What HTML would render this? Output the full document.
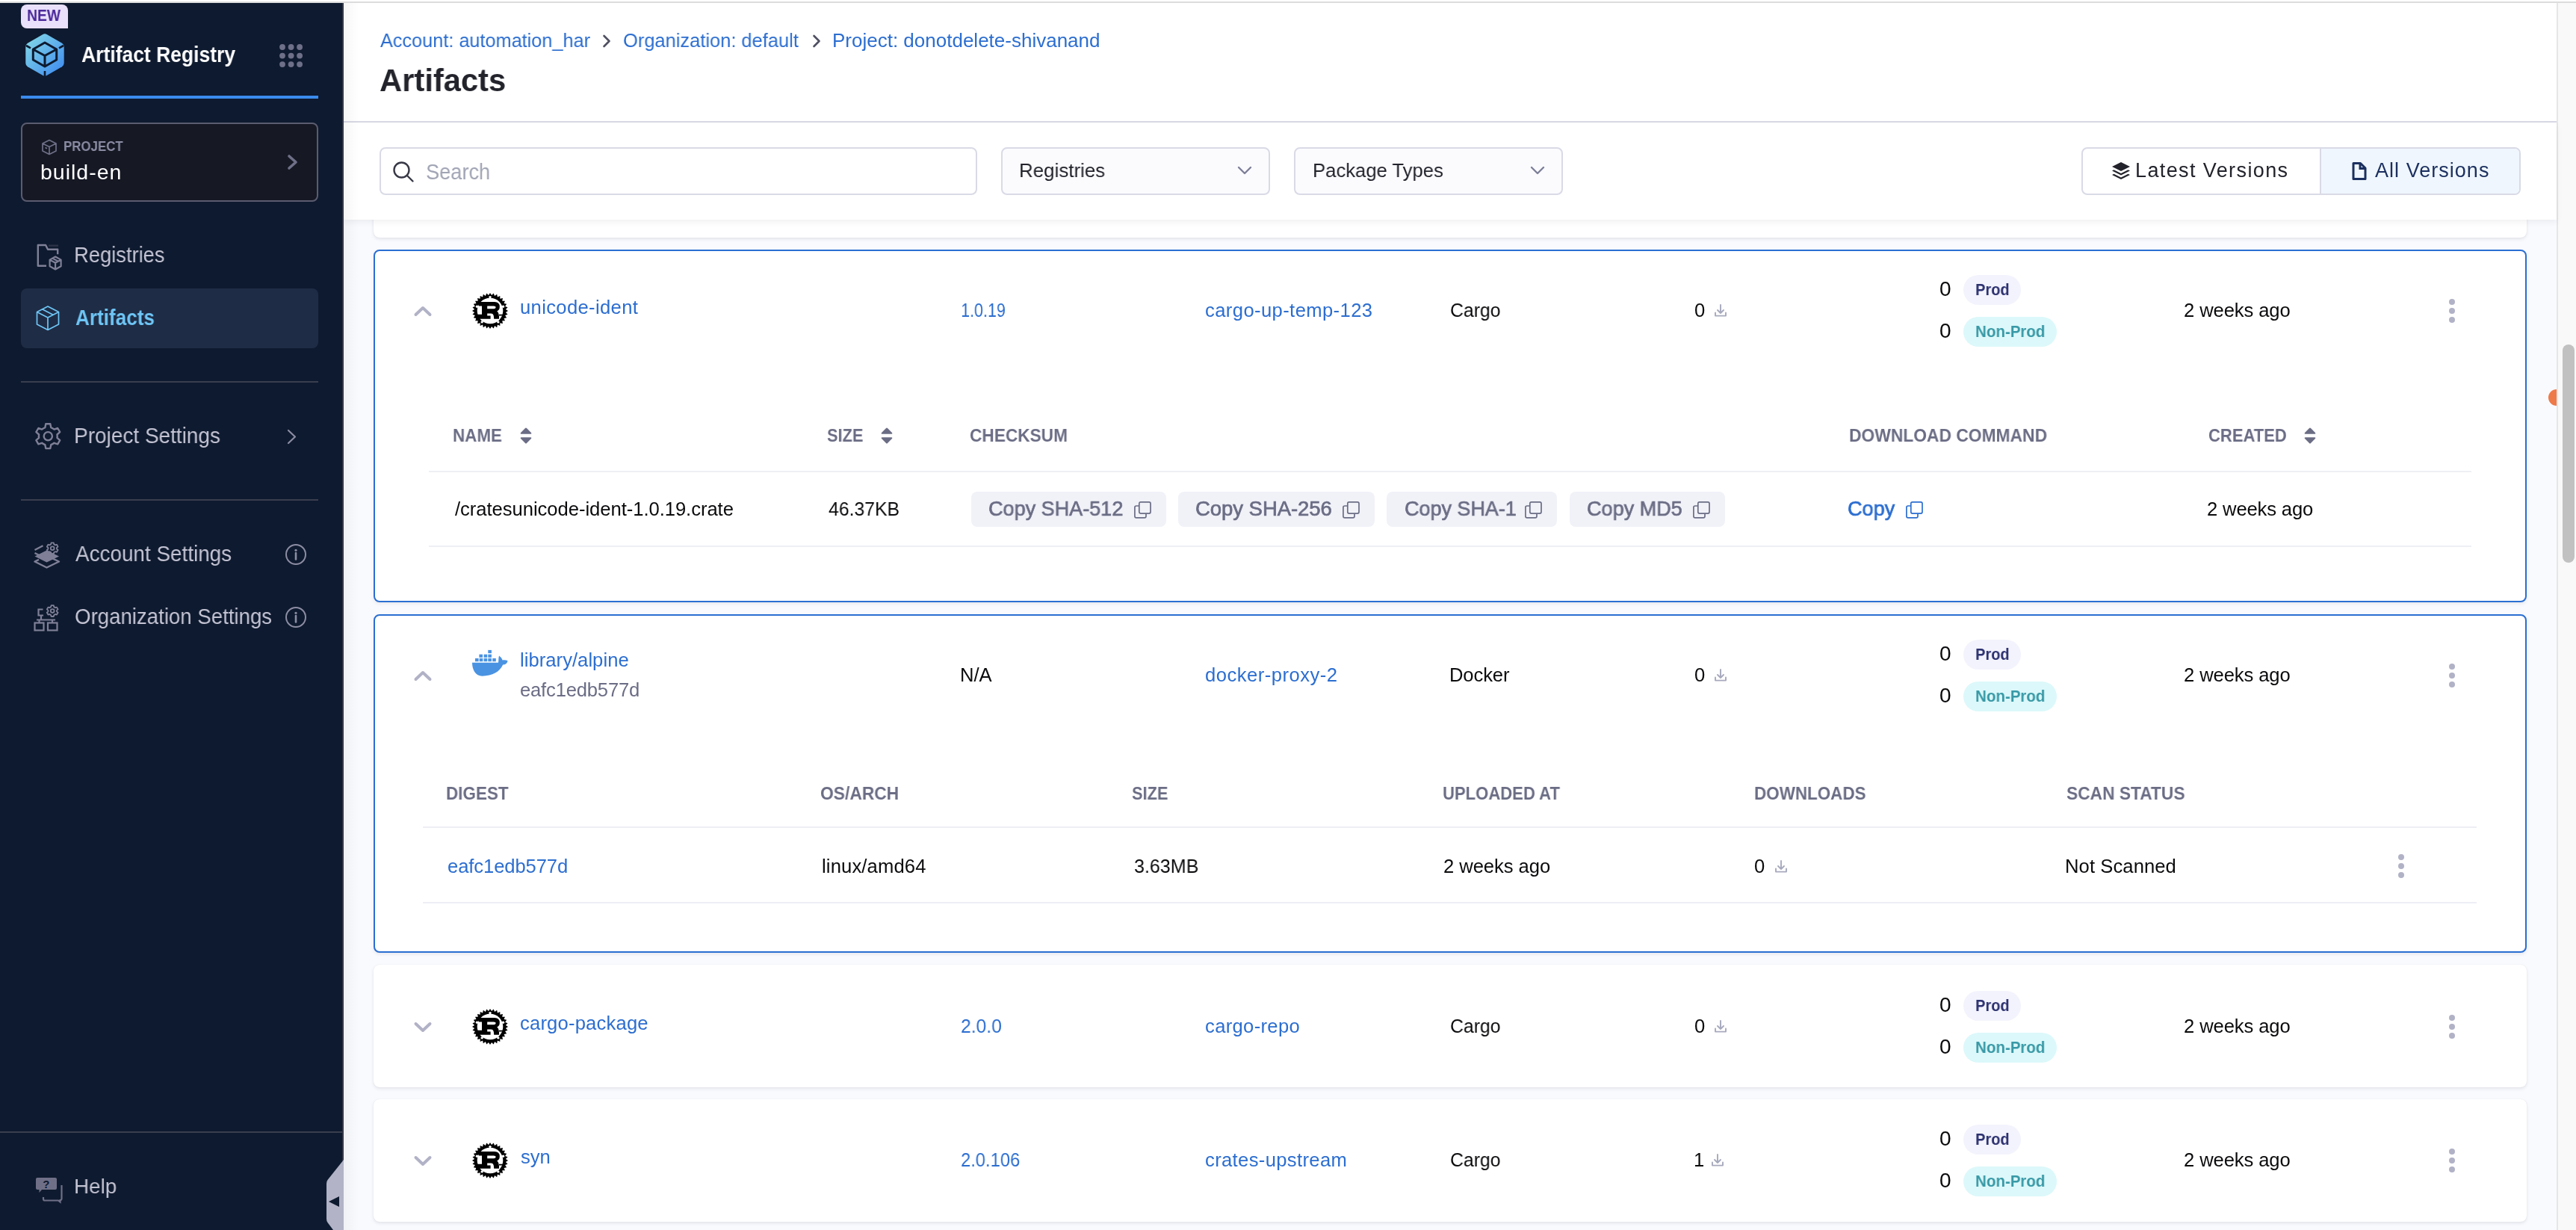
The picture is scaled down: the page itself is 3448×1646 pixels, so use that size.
<!DOCTYPE html>
<html><head><meta charset="utf-8">
<style>
html,body{margin:0;padding:0;}
body{width:3448px;height:1646px;overflow:hidden;position:relative;background:#fff;font-family:"Liberation Sans",sans-serif;}
.a{position:absolute;box-sizing:border-box;}
.t{position:absolute;white-space:nowrap;will-change:transform;}
svg{position:absolute;overflow:visible;}
</style></head><body>
<!-- top strip -->
<div class="a" style="left:0;top:2px;width:3448px;height:2px;background:#dcdcdc"></div>
<!-- main bg -->
<div class="a" style="left:460px;top:4px;width:2962px;height:1642px;background:#f9fafe"></div>
<!-- orange dot -->
<div class="a" style="left:3411px;top:521px;width:22px;height:22px;border-radius:50%;background:#ee7a4a"></div>
<!-- scrollbar -->
<div class="a" style="left:3422px;top:4px;width:26px;height:1642px;background:#f9f9f9;border-left:2px solid #e6e6e6"></div>
<div class="a" style="left:3430px;top:461px;width:16px;height:292px;border-radius:8px;background:#c1c1c1"></div>

<!-- previous card -->
<div class="a" style="left:500px;top:230px;width:2882px;height:88px;background:#fff;border-radius:8px;box-shadow:0 0 1px rgba(40,41,61,.10),0 2px 4px rgba(96,97,112,.14)"></div>
<!-- card 1 -->
<div class="a" style="left:500px;top:334px;width:2882px;height:472px;background:#fff;border:2px solid #2a6fd2;border-radius:8px;box-shadow:0 2px 4px rgba(96,97,112,.12)"></div>
<!-- card 2 -->
<div class="a" style="left:500px;top:822px;width:2882px;height:453px;background:#fff;border:2px solid #2a6fd2;border-radius:8px;box-shadow:0 2px 4px rgba(96,97,112,.12)"></div>
<!-- card 3 -->
<div class="a" style="left:500px;top:1291px;width:2882px;height:164px;background:#fff;border-radius:8px;box-shadow:0 0 1px rgba(40,41,61,.10),0 2px 4px rgba(96,97,112,.14)"></div>
<!-- card 4 -->
<div class="a" style="left:500px;top:1471px;width:2882px;height:164px;background:#fff;border-radius:8px;box-shadow:0 0 1px rgba(40,41,61,.10),0 2px 4px rgba(96,97,112,.14)"></div>

<!-- header -->
<div class="a" style="left:460px;top:4px;width:2962px;height:160px;background:#fff;border-bottom:2px solid #d9dae6"></div>
<div class="a" style="left:460px;top:164px;width:2962px;height:130px;background:#fff;box-shadow:0 3px 8px rgba(40,41,61,.07)"></div>
<!-- sidebar shadow on main -->
<div class="a" style="left:460px;top:4px;width:20px;height:1642px;background:linear-gradient(90deg,rgba(0,0,0,.035),rgba(0,0,0,0))"></div>

<!-- breadcrumb chevrons -->
<svg style="left:806px;top:46px" width="12" height="18" viewBox="0 0 12 18"><path d="M2.5 2 L9.5 9 L2.5 16" fill="none" stroke="#4f5162" stroke-width="2.6" stroke-linecap="round" stroke-linejoin="round"/></svg>
<svg style="left:1087px;top:46px" width="12" height="18" viewBox="0 0 12 18"><path d="M2.5 2 L9.5 9 L2.5 16" fill="none" stroke="#4f5162" stroke-width="2.6" stroke-linecap="round" stroke-linejoin="round"/></svg>

<!-- search box -->
<div class="a" style="left:508px;top:197px;width:800px;height:64px;border:2px solid #d9dae6;border-radius:8px;background:#fff"></div>
<svg style="left:525px;top:215px" width="30" height="30" viewBox="0 0 30 30"><circle cx="12.5" cy="12.5" r="10" fill="none" stroke="#383946" stroke-width="2.4"/><path d="M20 20 L27.5 27.5" stroke="#383946" stroke-width="2.4" stroke-linecap="round"/></svg>
<!-- dropdowns -->
<div class="a" style="left:1340px;top:197px;width:360px;height:64px;border:2px solid #d9dae6;border-radius:8px;background:#fbfbfe"></div>
<svg style="left:1656px;top:221px" width="20" height="15" viewBox="0 0 20 15"><path d="M2 3 L10 11 L18 3" fill="none" stroke="#7d7f98" stroke-width="2.4" stroke-linecap="round" stroke-linejoin="round"/></svg>
<div class="a" style="left:1732px;top:197px;width:360px;height:64px;border:2px solid #d9dae6;border-radius:8px;background:#fbfbfe"></div>
<svg style="left:2048px;top:221px" width="20" height="15" viewBox="0 0 20 15"><path d="M2 3 L10 11 L18 3" fill="none" stroke="#7d7f98" stroke-width="2.4" stroke-linecap="round" stroke-linejoin="round"/></svg>
<!-- toggle -->
<div class="a" style="left:2786px;top:197px;width:588px;height:64px;border:2px solid #d9dae6;border-radius:8px;background:#fff;overflow:hidden"><div class="a" style="left:317px;top:0;width:269px;height:60px;background:#eff6fd;border-left:2px solid #d9dae6"></div></div>
<svg style="left:2826px;top:216px" width="26" height="25" viewBox="0 0 26 25"><path d="M13 1 L25 7 L13 13 L1 7 Z" fill="#22232b"/><path d="M3.5 11.2 L13 16 L22.5 11.2 L25 12.5 L13 18.5 L1 12.5 Z" fill="#22232b"/><path d="M3.5 16.7 L13 21.5 L22.5 16.7 L25 18 L13 24 L1 18 Z" fill="#22232b"/></svg>
<svg style="left:3148px;top:216px" width="20" height="26" viewBox="0 0 20 26"><path d="M2 2.5 H11.5 L18 9 V23.5 H2 Z" fill="none" stroke="#1b2f5f" stroke-width="3" stroke-linejoin="round"/><path d="M11 2.5 V9.5 H18" fill="none" stroke="#1b2f5f" stroke-width="3"/></svg>

<!-- ========== SIDEBAR ========== -->
<div class="a" style="left:0;top:4px;width:460px;height:1642px;background:#0e1a2f;border-right:2px solid #353848"></div>
<!-- NEW badge -->
<div class="a" style="left:28px;top:6px;width:63px;height:32px;background:#e9e0fb;border-radius:8px 8px 0 8px"></div>
<!-- logo -->
<svg style="left:34px;top:45px" width="52" height="57" viewBox="0 0 52 57">
<defs><linearGradient id="lg" x1="0" y1="0" x2="1" y2="1"><stop offset="0" stop-color="#86dce6"/><stop offset="1" stop-color="#3b87f0"/></linearGradient></defs>
<path d="M23 1.2 Q26 -0.5 29 1.2 L49 12.7 Q51.7 14.3 51.7 17.5 L51.7 39.5 Q51.7 42.7 49 44.3 L29 55.8 Q26 57.5 23 55.8 L3 44.3 Q0.3 42.7 0.3 39.5 L0.3 17.5 Q0.3 14.3 3 12.7 Z" fill="url(#lg)"/>
<path d="M26 12 L41.7 21 L41.7 35 L26 44 L10.3 35 L10.3 21 Z M10.3 21 L26 29.5 L41.7 21 M26 29.5 L26 44" fill="none" stroke="#0e1a2f" stroke-width="3" stroke-linejoin="round"/>
<path d="M1 16 L7 19.3 M51 16 L45 19.3 M26 50 L26 57" stroke="#0e1a2f" stroke-width="2.6"/>
</svg>
<!-- grid dots -->
<svg style="left:370px;top:55px" width="40" height="40" viewBox="0 0 40 40" fill="#6e6f88">
<circle cx="8" cy="8" r="3.9"/><circle cx="19.6" cy="8" r="3.9"/><circle cx="31.1" cy="8" r="3.9"/>
<circle cx="8" cy="19.6" r="3.9"/><circle cx="19.6" cy="19.6" r="3.9"/><circle cx="31.1" cy="19.6" r="3.9"/>
<circle cx="8" cy="31.1" r="3.9"/><circle cx="19.6" cy="31.1" r="3.9"/><circle cx="31.1" cy="31.1" r="3.9"/>
</svg>
<div class="a" style="left:28px;top:128px;width:398px;height:4px;background:#3b8bec"></div>
<!-- project box -->
<div class="a" style="left:28px;top:164px;width:398px;height:106px;background:#161924;border:2px solid #5b5c70;border-radius:8px"></div>
<svg style="left:55px;top:186px" width="22" height="22" viewBox="0 0 22 22"><path d="M11 1.5 L20 6 L20 16 L11 20.5 L2 16 L2 6 Z M2 6 L11 10.5 L20 6 M11 10.5 L11 20.5 M5.5 11.5 L8 12.7" fill="none" stroke="#6f7088" stroke-width="1.7" stroke-linejoin="round"/></svg>
<svg style="left:383px;top:206px" width="18" height="24" viewBox="0 0 18 24"><path d="M4 3 L13 11 L4 19" fill="none" stroke="#6f7088" stroke-width="3.6" stroke-linecap="round" stroke-linejoin="round"/></svg>
<!-- registries icon -->
<svg style="left:48px;top:325px" width="38" height="38" viewBox="0 0 38 38" fill="none" stroke="#7f8098" stroke-width="2.4" stroke-linejoin="round">
<path d="M14 30.8 H2.8 V3 H13.1 L16 8.8 H29.2 V15.3"/><path d="M17 3.7 H30" stroke="#2b3247"/>
<path d="M26.1 18.5 L33.6 22.6 L33.6 31.3 L26.1 35.5 L18.6 31.3 L18.6 22.6 Z M18.6 22.6 L26.1 26.8 L33.6 22.6 M26.1 26.8 L26.1 35.5 M22.3 20.6 L29.8 24.7" stroke-width="2.2"/>
</svg>
<!-- active item -->
<div class="a" style="left:28px;top:386px;width:398px;height:80px;background:#1f2c45;border-radius:8px"></div>
<svg style="left:48px;top:408px" width="34" height="36" viewBox="0 0 34 36" fill="none" stroke="#6ec6f6" stroke-width="1.7" stroke-linejoin="round">
<path d="M16 2 L30.5 9.5 L30.5 26 L16 33.5 L1.5 26 L1.5 9.5 Z M1.5 9.5 L16 17 L30.5 9.5 M16 17 L16 33.5 M8.5 5.7 L23 13.2"/>
</svg>
<div class="a" style="left:28px;top:510px;width:398px;height:2px;background:#3a3e4f"></div>
<!-- gear -->
<svg style="left:46px;top:565px" width="37" height="37" viewBox="0 0 37 37">
<path id="gearp" d="M15.3 2.3 H21.3 L22.3 7.2 Q24.6 8.1 26.5 9.6 L31.2 8 L34.2 13.2 L30.5 16.5 Q30.9 18.5 30.5 20.9 L34.2 24.2 L31.2 29.4 L26.5 27.8 Q24.6 29.3 22.3 30.2 L21.3 35.1 H15.3 L14.3 30.2 Q12 29.3 10.1 27.8 L5.4 29.4 L2.4 24.2 L6.1 20.9 Q5.7 18.7 6.1 16.5 L2.4 13.2 L5.4 8 L10.1 9.6 Q12 8.1 14.3 7.2 Z" fill="none" stroke="#7f8098" stroke-width="2.4" stroke-linejoin="round"/>
<circle cx="18.3" cy="18.7" r="5.6" fill="none" stroke="#7f8098" stroke-width="2.4"/>
</svg>
<svg style="left:383px;top:573px" width="16" height="24" viewBox="0 0 16 24"><path d="M3 3 L12 11.5 L3 20" fill="none" stroke="#8c8da4" stroke-width="2.2" stroke-linecap="round" stroke-linejoin="round"/></svg>
<div class="a" style="left:28px;top:668px;width:398px;height:2px;background:#3a3e4f"></div>
<!-- account settings icon -->
<svg style="left:44px;top:722px" width="40" height="40" viewBox="0 0 40 40">
<path d="M2.5 18 L14 23.8 L18.5 21.6 L35 29.5 L18.5 37.5 L2.5 29.5 L8 26.8" fill="none" stroke="#7f8098" stroke-width="2.4" stroke-linejoin="round"/>
<path d="M2.5 22.5 L18.5 30.5 L35 22.5 L18.5 14.5 Z" fill="#7f8098"/>
<path d="M2.5 14 L13.5 8.3" stroke="#7f8098" stroke-width="2.4"/>
<g transform="translate(26.2,11.2) scale(0.8)"><g fill="none" stroke="#7f8098" stroke-width="2.3" stroke-linejoin="round"><path d="M-2 -8.5 H2 L2.6 -6 Q3.8 -5.5 4.7 -4.7 L7.2 -5.5 L9.2 -2 L7.2 -0.2 Q7.3 1 7.2 1.7 L9.2 3.5 L7.2 7 L4.7 6.2 Q3.8 7 2.6 7.5 L2 10 H-2 L-2.6 7.5 Q-3.8 7 -4.7 6.2 L-7.2 7 L-9.2 3.5 L-7.2 1.7 Q-7.3 0.7 -7.2 -0.2 L-9.2 -2 L-7.2 -5.5 L-4.7 -4.7 Q-3.8 -5.5 -2.6 -6 Z"/><circle cx="0" cy="0.75" r="3"/></g></g>
</svg>
<!-- org settings icon -->
<svg style="left:44px;top:806px" width="40" height="40" viewBox="0 0 40 40" fill="none" stroke="#7f8098" stroke-width="2.2">
<path d="M13.5 9.5 H7.5 V17.5 H14 M11 17.5 V23.5 M5 23.5 H30 M8.5 23.5 V27 M26 23.5 V27"/>
<rect x="2.5" y="27.5" width="12" height="10"/><rect x="20" y="27.5" width="12.5" height="10"/>
<g transform="translate(26.2,11) scale(0.8)"><g fill="none" stroke="#7f8098" stroke-width="2.3" stroke-linejoin="round"><path d="M-2 -8.5 H2 L2.6 -6 Q3.8 -5.5 4.7 -4.7 L7.2 -5.5 L9.2 -2 L7.2 -0.2 Q7.3 1 7.2 1.7 L9.2 3.5 L7.2 7 L4.7 6.2 Q3.8 7 2.6 7.5 L2 10 H-2 L-2.6 7.5 Q-3.8 7 -4.7 6.2 L-7.2 7 L-9.2 3.5 L-7.2 1.7 Q-7.3 0.7 -7.2 -0.2 L-9.2 -2 L-7.2 -5.5 L-4.7 -4.7 Q-3.8 -5.5 -2.6 -6 Z"/><circle cx="0" cy="0.75" r="3"/></g></g>
</svg>

<!-- info icons -->
<svg style="left:381px;top:727px" width="30" height="30" viewBox="0 0 30 30"><circle cx="15" cy="15" r="13" fill="none" stroke="#8c8da4" stroke-width="2"/><circle cx="15" cy="9.3" r="1.6" fill="#8c8da4"/><path d="M15 13 V21.5" stroke="#8c8da4" stroke-width="2.6" stroke-linecap="round"/></svg>
<svg style="left:381px;top:811px" width="30" height="30" viewBox="0 0 30 30"><circle cx="15" cy="15" r="13" fill="none" stroke="#8c8da4" stroke-width="2"/><circle cx="15" cy="9.3" r="1.6" fill="#8c8da4"/><path d="M15 13 V21.5" stroke="#8c8da4" stroke-width="2.6" stroke-linecap="round"/></svg>
<!-- bottom divider -->
<div class="a" style="left:0;top:1514px;width:458px;height:2px;background:#3a3e4f"></div>
<!-- help icon -->
<svg style="left:47px;top:1575px" width="40" height="36" viewBox="0 0 40 36">
<path d="M11 27 V29.5 Q11 31.5 13 31.5 H31 L33.5 33.5 V31 Q35.5 31 35.5 29 V11" fill="none" stroke="#6f7088" stroke-width="2.2"/>
<path d="M3 1 H27 Q29 1 29 3 V15 Q29 17 27 17 H9 L5.5 21 V17 H3 Q1 17 1 15 V3 Q1 1 3 1 Z" fill="#6f7088"/>
<text x="14.8" y="14.6" font-family="Liberation Sans" font-weight="700" font-size="15" fill="#0e1a2f" text-anchor="middle">?</text>
</svg>
<!-- collapse tab -->
<svg style="left:434px;top:1550px" width="28" height="96" viewBox="0 0 28 96"><path d="M26 2 L26 96 L12 96 L4.5 86 Q3 84 3 81 L3 34 Q3 31 4.5 29 L26 2 Z" fill="#b2b3c6"/><path d="M6 58 L20 51 L20 65 Z" fill="#0e1a2f"/></svg>
<svg style="left:553.5px;top:408.5px" width="24" height="15" viewBox="0 0 24 15"><path d="M2.5 12 L12 3 L21.5 12" fill="none" stroke="#b1b2c6" stroke-width="4" stroke-linecap="round" stroke-linejoin="round"/></svg>
<svg style="left:632px;top:392px" width="48" height="48" viewBox="0 0 48 48"><polygon points="24.00,0.00 26.06,3.10 28.68,0.46 30.10,3.90 33.18,1.83 33.90,5.48 37.33,4.04 37.32,7.77 40.97,7.03 40.23,10.68 43.96,10.67 42.52,14.10 46.17,14.82 44.10,17.90 47.54,19.32 44.90,21.94 48.00,24.00 44.90,26.06 47.54,28.68 44.10,30.10 46.17,33.18 42.52,33.90 43.96,37.33 40.23,37.32 40.97,40.97 37.32,40.23 37.33,43.96 33.90,42.52 33.18,46.17 30.10,44.10 28.68,47.54 26.06,44.90 24.00,48.00 21.94,44.90 19.32,47.54 17.90,44.10 14.82,46.17 14.10,42.52 10.67,43.96 10.68,40.23 7.03,40.97 7.77,37.32 4.04,37.33 5.48,33.90 1.83,33.18 3.90,30.10 0.46,28.68 3.10,26.06 0.00,24.00 3.10,21.94 0.46,19.32 3.90,17.90 1.83,14.82 5.48,14.10 4.04,10.67 7.77,10.68 7.03,7.03 10.68,7.77 10.67,4.04 14.10,5.48 14.82,1.83 17.90,3.90 19.32,0.46 21.94,3.10" fill="#000"/><circle cx="24" cy="24" r="17.3" fill="#fff"/><path d="M9 12 H30 Q36.8 12 36.8 18.5 Q36.8 23 33.2 24.6 Q35.6 26 35.8 30.6 H43 V34.7 H29.2 L29 32 Q28.6 27.6 25 27.6 H20.2 V30.6 H24.6 V34.7 H5 V28.8 H13 V17.4 H9 Z M20.2 17.4 V21.2 H28.8 Q31.6 21.2 31.6 19.3 Q31.6 17.4 28.8 17.4 Z M36 28.8 H43 V34.7 H36 Z" fill="#000" fill-rule="evenodd"/><circle cx="24.00" cy="5.60" r="1.7" fill="#fff"/><circle cx="41.50" cy="18.31" r="1.7" fill="#fff"/><circle cx="34.82" cy="38.89" r="1.7" fill="#fff"/><circle cx="13.18" cy="38.89" r="1.7" fill="#fff"/><circle cx="6.50" cy="18.31" r="1.7" fill="#fff"/></svg>
<div class="a" style="left:2628px;top:368px;width:77px;height:40px;border-radius:20px;background:#f3f3fd"></div>
<div class="a" style="left:2628px;top:424px;width:125px;height:40px;border-radius:20px;background:#dcf8fa"></div>
<svg style="left:3277px;top:399px" width="10" height="34" viewBox="0 0 10 34" fill="#b1b2c6"><circle cx="5" cy="5" r="4"/><circle cx="5" cy="17" r="4"/><circle cx="5" cy="29" r="4"/></svg>
<svg style="left:553.5px;top:896.5px" width="24" height="15" viewBox="0 0 24 15"><path d="M2.5 12 L12 3 L21.5 12" fill="none" stroke="#b1b2c6" stroke-width="4" stroke-linecap="round" stroke-linejoin="round"/></svg>
<svg style="left:632px;top:869px" width="48" height="36" viewBox="0 0 48 36" fill="#4a93e2"><rect x="21.3" y="0.9" width="4.6" height="4.2"/><rect x="9.4" y="6.7" width="4.6" height="4.2"/><rect x="15.6" y="6.7" width="4.6" height="4.2"/><rect x="21.3" y="6.7" width="4.6" height="4.2"/><rect x="4" y="12" width="4.6" height="4.2"/><rect x="9.7" y="12" width="4.6" height="4.2"/><rect x="15.6" y="12" width="4.6" height="4.2"/><rect x="21.3" y="12" width="4.6" height="4.2"/><rect x="27.2" y="12" width="4.6" height="4.2"/><path d="M0 17.8 H35 C35.5 15 35 12 36 8.5 C37.8 9.8 40 12 40.6 14.6 C43 14 45.5 14.5 47.6 15.3 C47 18.8 44.5 20.5 41.2 20.6 C37 30 27 35.7 13.5 35.7 C4.5 35.7 0 27 0 17.8 Z"/></svg>
<div class="a" style="left:2628px;top:856px;width:77px;height:40px;border-radius:20px;background:#f3f3fd"></div>
<div class="a" style="left:2628px;top:912px;width:125px;height:40px;border-radius:20px;background:#dcf8fa"></div>
<svg style="left:3277px;top:887px" width="10" height="34" viewBox="0 0 10 34" fill="#b1b2c6"><circle cx="5" cy="5" r="4"/><circle cx="5" cy="17" r="4"/><circle cx="5" cy="29" r="4"/></svg>
<svg style="left:553.5px;top:1366.5px" width="24" height="15" viewBox="0 0 24 15"><path d="M2.5 3 L12 12 L21.5 3" fill="none" stroke="#b1b2c6" stroke-width="4" stroke-linecap="round" stroke-linejoin="round"/></svg>
<svg style="left:632px;top:1350px" width="48" height="48" viewBox="0 0 48 48"><polygon points="24.00,0.00 26.06,3.10 28.68,0.46 30.10,3.90 33.18,1.83 33.90,5.48 37.33,4.04 37.32,7.77 40.97,7.03 40.23,10.68 43.96,10.67 42.52,14.10 46.17,14.82 44.10,17.90 47.54,19.32 44.90,21.94 48.00,24.00 44.90,26.06 47.54,28.68 44.10,30.10 46.17,33.18 42.52,33.90 43.96,37.33 40.23,37.32 40.97,40.97 37.32,40.23 37.33,43.96 33.90,42.52 33.18,46.17 30.10,44.10 28.68,47.54 26.06,44.90 24.00,48.00 21.94,44.90 19.32,47.54 17.90,44.10 14.82,46.17 14.10,42.52 10.67,43.96 10.68,40.23 7.03,40.97 7.77,37.32 4.04,37.33 5.48,33.90 1.83,33.18 3.90,30.10 0.46,28.68 3.10,26.06 0.00,24.00 3.10,21.94 0.46,19.32 3.90,17.90 1.83,14.82 5.48,14.10 4.04,10.67 7.77,10.68 7.03,7.03 10.68,7.77 10.67,4.04 14.10,5.48 14.82,1.83 17.90,3.90 19.32,0.46 21.94,3.10" fill="#000"/><circle cx="24" cy="24" r="17.3" fill="#fff"/><path d="M9 12 H30 Q36.8 12 36.8 18.5 Q36.8 23 33.2 24.6 Q35.6 26 35.8 30.6 H43 V34.7 H29.2 L29 32 Q28.6 27.6 25 27.6 H20.2 V30.6 H24.6 V34.7 H5 V28.8 H13 V17.4 H9 Z M20.2 17.4 V21.2 H28.8 Q31.6 21.2 31.6 19.3 Q31.6 17.4 28.8 17.4 Z M36 28.8 H43 V34.7 H36 Z" fill="#000" fill-rule="evenodd"/><circle cx="24.00" cy="5.60" r="1.7" fill="#fff"/><circle cx="41.50" cy="18.31" r="1.7" fill="#fff"/><circle cx="34.82" cy="38.89" r="1.7" fill="#fff"/><circle cx="13.18" cy="38.89" r="1.7" fill="#fff"/><circle cx="6.50" cy="18.31" r="1.7" fill="#fff"/></svg>
<div class="a" style="left:2628px;top:1326px;width:77px;height:40px;border-radius:20px;background:#f3f3fd"></div>
<div class="a" style="left:2628px;top:1382px;width:125px;height:40px;border-radius:20px;background:#dcf8fa"></div>
<svg style="left:3277px;top:1357px" width="10" height="34" viewBox="0 0 10 34" fill="#b1b2c6"><circle cx="5" cy="5" r="4"/><circle cx="5" cy="17" r="4"/><circle cx="5" cy="29" r="4"/></svg>
<svg style="left:553.5px;top:1545.5px" width="24" height="15" viewBox="0 0 24 15"><path d="M2.5 3 L12 12 L21.5 3" fill="none" stroke="#b1b2c6" stroke-width="4" stroke-linecap="round" stroke-linejoin="round"/></svg>
<svg style="left:632px;top:1529px" width="48" height="48" viewBox="0 0 48 48"><polygon points="24.00,0.00 26.06,3.10 28.68,0.46 30.10,3.90 33.18,1.83 33.90,5.48 37.33,4.04 37.32,7.77 40.97,7.03 40.23,10.68 43.96,10.67 42.52,14.10 46.17,14.82 44.10,17.90 47.54,19.32 44.90,21.94 48.00,24.00 44.90,26.06 47.54,28.68 44.10,30.10 46.17,33.18 42.52,33.90 43.96,37.33 40.23,37.32 40.97,40.97 37.32,40.23 37.33,43.96 33.90,42.52 33.18,46.17 30.10,44.10 28.68,47.54 26.06,44.90 24.00,48.00 21.94,44.90 19.32,47.54 17.90,44.10 14.82,46.17 14.10,42.52 10.67,43.96 10.68,40.23 7.03,40.97 7.77,37.32 4.04,37.33 5.48,33.90 1.83,33.18 3.90,30.10 0.46,28.68 3.10,26.06 0.00,24.00 3.10,21.94 0.46,19.32 3.90,17.90 1.83,14.82 5.48,14.10 4.04,10.67 7.77,10.68 7.03,7.03 10.68,7.77 10.67,4.04 14.10,5.48 14.82,1.83 17.90,3.90 19.32,0.46 21.94,3.10" fill="#000"/><circle cx="24" cy="24" r="17.3" fill="#fff"/><path d="M9 12 H30 Q36.8 12 36.8 18.5 Q36.8 23 33.2 24.6 Q35.6 26 35.8 30.6 H43 V34.7 H29.2 L29 32 Q28.6 27.6 25 27.6 H20.2 V30.6 H24.6 V34.7 H5 V28.8 H13 V17.4 H9 Z M20.2 17.4 V21.2 H28.8 Q31.6 21.2 31.6 19.3 Q31.6 17.4 28.8 17.4 Z M36 28.8 H43 V34.7 H36 Z" fill="#000" fill-rule="evenodd"/><circle cx="24.00" cy="5.60" r="1.7" fill="#fff"/><circle cx="41.50" cy="18.31" r="1.7" fill="#fff"/><circle cx="34.82" cy="38.89" r="1.7" fill="#fff"/><circle cx="13.18" cy="38.89" r="1.7" fill="#fff"/><circle cx="6.50" cy="18.31" r="1.7" fill="#fff"/></svg>
<div class="a" style="left:2628px;top:1505px;width:77px;height:40px;border-radius:20px;background:#f3f3fd"></div>
<div class="a" style="left:2628px;top:1561px;width:125px;height:40px;border-radius:20px;background:#dcf8fa"></div>
<svg style="left:3277px;top:1536px" width="10" height="34" viewBox="0 0 10 34" fill="#b1b2c6"><circle cx="5" cy="5" r="4"/><circle cx="5" cy="17" r="4"/><circle cx="5" cy="29" r="4"/></svg>
<svg style="left:2294.5px;top:407px" width="17" height="17" viewBox="0 0 17 17" fill="none" stroke="#a7a9bd" stroke-width="1.9" stroke-linecap="round" stroke-linejoin="round"><path d="M8 1 V12 M4 8 L8 12 L12 8 M1 11.5 V15.6 H15 V11.5"/></svg>
<svg style="left:2294.5px;top:895px" width="17" height="17" viewBox="0 0 17 17" fill="none" stroke="#a7a9bd" stroke-width="1.9" stroke-linecap="round" stroke-linejoin="round"><path d="M8 1 V12 M4 8 L8 12 L12 8 M1 11.5 V15.6 H15 V11.5"/></svg>
<svg style="left:2294.5px;top:1365px" width="17" height="17" viewBox="0 0 17 17" fill="none" stroke="#a7a9bd" stroke-width="1.9" stroke-linecap="round" stroke-linejoin="round"><path d="M8 1 V12 M4 8 L8 12 L12 8 M1 11.5 V15.6 H15 V11.5"/></svg>
<svg style="left:2290.5px;top:1544px" width="17" height="17" viewBox="0 0 17 17" fill="none" stroke="#a7a9bd" stroke-width="1.9" stroke-linecap="round" stroke-linejoin="round"><path d="M8 1 V12 M4 8 L8 12 L12 8 M1 11.5 V15.6 H15 V11.5"/></svg>
<div class="a" style="left:574px;top:630px;width:2734px;height:2px;background:#eeeff5"></div>
<div class="a" style="left:574px;top:730px;width:2734px;height:2px;background:#eeeff5"></div>
<svg style="left:696px;top:572px" width="16" height="22" viewBox="0 0 16 22" fill="#6b6d85"><path d="M8 0.5 Q8.6 0.5 9 1 L15.2 7.3 Q15.8 8.8 14.3 8.8 H1.7 Q0.2 8.8 0.8 7.3 L7 1 Q7.4 0.5 8 0.5 Z"/><path d="M8 21.5 Q8.6 21.5 9 21 L15.2 14.7 Q15.8 13.2 14.3 13.2 H1.7 Q0.2 13.2 0.8 14.7 L7 21 Q7.4 21.5 8 21.5 Z"/></svg>
<svg style="left:1178.5px;top:572px" width="16" height="22" viewBox="0 0 16 22" fill="#6b6d85"><path d="M8 0.5 Q8.6 0.5 9 1 L15.2 7.3 Q15.8 8.8 14.3 8.8 H1.7 Q0.2 8.8 0.8 7.3 L7 1 Q7.4 0.5 8 0.5 Z"/><path d="M8 21.5 Q8.6 21.5 9 21 L15.2 14.7 Q15.8 13.2 14.3 13.2 H1.7 Q0.2 13.2 0.8 14.7 L7 21 Q7.4 21.5 8 21.5 Z"/></svg>
<svg style="left:3084px;top:572px" width="16" height="22" viewBox="0 0 16 22" fill="#6b6d85"><path d="M8 0.5 Q8.6 0.5 9 1 L15.2 7.3 Q15.8 8.8 14.3 8.8 H1.7 Q0.2 8.8 0.8 7.3 L7 1 Q7.4 0.5 8 0.5 Z"/><path d="M8 21.5 Q8.6 21.5 9 21 L15.2 14.7 Q15.8 13.2 14.3 13.2 H1.7 Q0.2 13.2 0.8 14.7 L7 21 Q7.4 21.5 8 21.5 Z"/></svg>
<div class="a" style="left:1300px;top:658px;width:261px;height:47px;border-radius:8px;background:#f1f2f8"></div>
<div class="a" style="left:1577px;top:658px;width:263px;height:47px;border-radius:8px;background:#f1f2f8"></div>
<div class="a" style="left:1856px;top:658px;width:228px;height:47px;border-radius:8px;background:#f1f2f8"></div>
<div class="a" style="left:2101px;top:658px;width:208px;height:47px;border-radius:8px;background:#f1f2f8"></div>
<svg style="left:1517.5px;top:670.5px" width="23" height="23" viewBox="0 0 23 23" fill="none" stroke="#6b6d85" stroke-width="1.7"><rect x="6.8" y="0.9" width="15.2" height="15.2" rx="2"/><path d="M6.8 6 H3 Q0.9 6 0.9 8 V19.8 Q0.9 21.9 3 21.9 H14 Q16 21.9 16 19.8 V16.1"/></svg>
<svg style="left:1796.5px;top:670.5px" width="23" height="23" viewBox="0 0 23 23" fill="none" stroke="#6b6d85" stroke-width="1.7"><rect x="6.8" y="0.9" width="15.2" height="15.2" rx="2"/><path d="M6.8 6 H3 Q0.9 6 0.9 8 V19.8 Q0.9 21.9 3 21.9 H14 Q16 21.9 16 19.8 V16.1"/></svg>
<svg style="left:2041px;top:670.5px" width="23" height="23" viewBox="0 0 23 23" fill="none" stroke="#6b6d85" stroke-width="1.7"><rect x="6.8" y="0.9" width="15.2" height="15.2" rx="2"/><path d="M6.8 6 H3 Q0.9 6 0.9 8 V19.8 Q0.9 21.9 3 21.9 H14 Q16 21.9 16 19.8 V16.1"/></svg>
<svg style="left:2265.5px;top:670.5px" width="23" height="23" viewBox="0 0 23 23" fill="none" stroke="#6b6d85" stroke-width="1.7"><rect x="6.8" y="0.9" width="15.2" height="15.2" rx="2"/><path d="M6.8 6 H3 Q0.9 6 0.9 8 V19.8 Q0.9 21.9 3 21.9 H14 Q16 21.9 16 19.8 V16.1"/></svg>
<svg style="left:2550.5px;top:670.5px" width="23" height="23" viewBox="0 0 23 23" fill="none" stroke="#2c6ed0" stroke-width="1.7"><rect x="6.8" y="0.9" width="15.2" height="15.2" rx="2"/><path d="M6.8 6 H3 Q0.9 6 0.9 8 V19.8 Q0.9 21.9 3 21.9 H14 Q16 21.9 16 19.8 V16.1"/></svg>
<div class="a" style="left:566px;top:1106px;width:2749px;height:2px;background:#eeeff5"></div>
<div class="a" style="left:566px;top:1207px;width:2749px;height:2px;background:#eeeff5"></div>
<svg style="left:2376px;top:1151px" width="17" height="17" viewBox="0 0 17 17" fill="none" stroke="#a7a9bd" stroke-width="1.9" stroke-linecap="round" stroke-linejoin="round"><path d="M8 1 V12 M4 8 L8 12 L12 8 M1 11.5 V15.6 H15 V11.5"/></svg>
<svg style="left:3209px;top:1142px" width="10" height="34" viewBox="0 0 10 34" fill="#b1b2c6"><circle cx="5" cy="5" r="4"/><circle cx="5" cy="17" r="4"/><circle cx="5" cy="29" r="4"/></svg>
<div class="t" style="left:36.00px;top:10.88px;font:600 21.4px/21.4px 'Liberation Sans';color:#4c2a9b;transform:scaleX(0.8991);transform-origin:1.00px 0;">NEW</div>
<div class="t" style="left:108.70px;top:58.71px;font:700 28.7px/28.7px 'Liberation Sans';color:#ffffff;transform:scaleX(0.9233);transform-origin:0.00px 0;">Artifact Registry</div>
<div class="t" style="left:85.00px;top:188.02px;font:700 17.7px/17.7px 'Liberation Sans';color:#8b8ca4;transform:scaleX(0.9524);transform-origin:1.00px 0;">PROJECT</div>
<div class="t" style="left:54.00px;top:215.87px;font:400 28.5px/28.5px 'Liberation Sans';color:#ffffff;letter-spacing:0.992px;">build-en</div>
<div class="t" style="left:99.00px;top:326.77px;font:400 29.1px/29.1px 'Liberation Sans';color:#c4c4d4;transform:scaleX(0.9385);transform-origin:2.00px 0;">Registries</div>
<div class="t" style="left:101.00px;top:410.62px;font:700 28.8px/28.8px 'Liberation Sans';color:#6ec6f6;transform:scaleX(0.9067);transform-origin:0.00px 0;">Artifacts</div>
<div class="t" style="left:99.00px;top:569.37px;font:400 29.1px/29.1px 'Liberation Sans';color:#c4c4d4;transform:scaleX(0.9612);transform-origin:2.00px 0;">Project Settings</div>
<div class="t" style="left:101.00px;top:727.37px;font:400 29.1px/29.1px 'Liberation Sans';color:#c4c4d4;transform:scaleX(0.9578);transform-origin:0.00px 0;">Account Settings</div>
<div class="t" style="left:100.00px;top:810.97px;font:400 29.1px/29.1px 'Liberation Sans';color:#c4c4d4;transform:scaleX(0.9493);transform-origin:1.00px 0;">Organization Settings</div>
<div class="t" style="left:99.00px;top:1572.87px;font:400 28.5px/28.5px 'Liberation Sans';color:#c4c4d4;transform:scaleX(0.9755);transform-origin:2.00px 0;">Help</div>
<div class="t" style="left:508.50px;top:40.89px;font:400 26px/26px 'Liberation Sans';color:#2c6ed0;transform:scaleX(0.9720);transform-origin:0.00px 0;">Account: automation_har</div>
<div class="t" style="left:834.00px;top:40.89px;font:400 26px/26px 'Liberation Sans';color:#2c6ed0;transform:scaleX(0.9787);transform-origin:1.00px 0;">Organization: default</div>
<div class="t" style="left:1113.70px;top:40.89px;font:400 26px/26px 'Liberation Sans';color:#2c6ed0;">Project: donotdelete-shivanand</div>
<div class="t" style="left:508.00px;top:86.72px;font:700 42.5px/42.5px 'Liberation Sans';color:#22232b;transform:scaleX(0.9813);transform-origin:1.00px 0;">Artifacts</div>
<div class="t" style="left:569.90px;top:214.70px;font:400 29.3px/29.3px 'Liberation Sans';color:#a0a4b4;transform:scaleX(0.9267);transform-origin:1.00px 0;">Search</div>
<div class="t" style="left:1364.40px;top:214.80px;font:400 26.7px/26.7px 'Liberation Sans';color:#22232b;transform:scaleX(0.9699);transform-origin:2.00px 0;">Registries</div>
<div class="t" style="left:1756.80px;top:214.80px;font:400 26.7px/26.7px 'Liberation Sans';color:#22232b;transform:scaleX(0.9599);transform-origin:2.00px 0;">Package Types</div>
<div class="t" style="left:2858.40px;top:214.74px;font:400 27px/27px 'Liberation Sans';color:#22232b;letter-spacing:1.392px;">Latest Versions</div>
<div class="t" style="left:3178.80px;top:214.74px;font:400 27px/27px 'Liberation Sans';color:#1b2f5f;letter-spacing:1.031px;">All Versions</div>
<div class="t" style="left:696.00px;top:398.83px;font:400 25.6px/25.6px 'Liberation Sans';color:#2c6ed0;letter-spacing:0.345px;">unicode-ident</div>
<div class="t" style="left:1286.40px;top:402.63px;font:400 25.6px/25.6px 'Liberation Sans';color:#2c6ed0;transform:scaleX(0.8381);transform-origin:1.00px 0;">1.0.19</div>
<div class="t" style="left:1613.20px;top:402.93px;font:400 25.6px/25.6px 'Liberation Sans';color:#2c6ed0;letter-spacing:0.398px;">cargo-up-temp-123</div>
<div class="t" style="left:1940.80px;top:402.73px;font:400 25.6px/25.6px 'Liberation Sans';color:#0b0b0d;transform:scaleX(0.9668);transform-origin:1.00px 0;">Cargo</div>
<div class="t" style="left:2268.00px;top:402.93px;font:400 25.6px/25.6px 'Liberation Sans';color:#0b0b0d;">0</div>
<div class="t" style="left:2596.00px;top:373.00px;font:400 28px/28px 'Liberation Sans';color:#0b0b0d;">0</div>
<div class="t" style="left:2596.00px;top:428.90px;font:400 28px/28px 'Liberation Sans';color:#0b0b0d;">0</div>
<div class="t" style="left:2643.80px;top:376.63px;font:700 21.7px/21.7px 'Liberation Sans';color:#2d3270;transform:scaleX(0.9204);transform-origin:1.00px 0;">Prod</div>
<div class="t" style="left:2643.80px;top:432.63px;font:700 21.7px/21.7px 'Liberation Sans';color:#3899a6;transform:scaleX(0.9448);transform-origin:1.00px 0;">Non-Prod</div>
<div class="t" style="left:2922.60px;top:402.73px;font:400 25.6px/25.6px 'Liberation Sans';color:#0b0b0d;letter-spacing:-0.107px;">2 weeks ago</div>
<div class="t" style="left:696.00px;top:871.13px;font:400 25.6px/25.6px 'Liberation Sans';color:#2c6ed0;letter-spacing:0.041px;">library/alpine</div>
<div class="t" style="left:696.00px;top:911.13px;font:400 25.6px/25.6px 'Liberation Sans';color:#6b6d85;letter-spacing:-0.183px;">eafc1edb577d</div>
<div class="t" style="left:1285.40px;top:890.63px;font:400 25.6px/25.6px 'Liberation Sans';color:#0b0b0d;">N/A</div>
<div class="t" style="left:1613.20px;top:890.93px;font:400 25.6px/25.6px 'Liberation Sans';color:#2c6ed0;letter-spacing:0.481px;">docker-proxy-2</div>
<div class="t" style="left:1939.80px;top:890.73px;font:400 25.6px/25.6px 'Liberation Sans';color:#0b0b0d;letter-spacing:-0.129px;">Docker</div>
<div class="t" style="left:2268.00px;top:890.93px;font:400 25.6px/25.6px 'Liberation Sans';color:#0b0b0d;">0</div>
<div class="t" style="left:2596.00px;top:861.00px;font:400 28px/28px 'Liberation Sans';color:#0b0b0d;">0</div>
<div class="t" style="left:2596.00px;top:916.90px;font:400 28px/28px 'Liberation Sans';color:#0b0b0d;">0</div>
<div class="t" style="left:2643.80px;top:864.63px;font:700 21.7px/21.7px 'Liberation Sans';color:#2d3270;transform:scaleX(0.9204);transform-origin:1.00px 0;">Prod</div>
<div class="t" style="left:2643.80px;top:920.63px;font:700 21.7px/21.7px 'Liberation Sans';color:#3899a6;transform:scaleX(0.9448);transform-origin:1.00px 0;">Non-Prod</div>
<div class="t" style="left:2922.60px;top:890.73px;font:400 25.6px/25.6px 'Liberation Sans';color:#0b0b0d;letter-spacing:-0.107px;">2 weeks ago</div>
<div class="t" style="left:696.00px;top:1356.83px;font:400 25.6px/25.6px 'Liberation Sans';color:#2c6ed0;letter-spacing:0.185px;">cargo-package</div>
<div class="t" style="left:1286.40px;top:1360.63px;font:400 25.6px/25.6px 'Liberation Sans';color:#2c6ed0;transform:scaleX(0.9625);transform-origin:1.00px 0;">2.0.0</div>
<div class="t" style="left:1613.20px;top:1360.93px;font:400 25.6px/25.6px 'Liberation Sans';color:#2c6ed0;letter-spacing:0.329px;">cargo-repo</div>
<div class="t" style="left:1940.80px;top:1360.73px;font:400 25.6px/25.6px 'Liberation Sans';color:#0b0b0d;transform:scaleX(0.9668);transform-origin:1.00px 0;">Cargo</div>
<div class="t" style="left:2268.00px;top:1360.93px;font:400 25.6px/25.6px 'Liberation Sans';color:#0b0b0d;">0</div>
<div class="t" style="left:2596.00px;top:1331.00px;font:400 28px/28px 'Liberation Sans';color:#0b0b0d;">0</div>
<div class="t" style="left:2596.00px;top:1386.90px;font:400 28px/28px 'Liberation Sans';color:#0b0b0d;">0</div>
<div class="t" style="left:2643.80px;top:1334.63px;font:700 21.7px/21.7px 'Liberation Sans';color:#2d3270;transform:scaleX(0.9204);transform-origin:1.00px 0;">Prod</div>
<div class="t" style="left:2643.80px;top:1390.63px;font:700 21.7px/21.7px 'Liberation Sans';color:#3899a6;transform:scaleX(0.9448);transform-origin:1.00px 0;">Non-Prod</div>
<div class="t" style="left:2922.60px;top:1360.73px;font:400 25.6px/25.6px 'Liberation Sans';color:#0b0b0d;letter-spacing:-0.107px;">2 weeks ago</div>
<div class="t" style="left:697.00px;top:1535.83px;font:400 25.6px/25.6px 'Liberation Sans';color:#2c6ed0;letter-spacing:-0.097px;">syn</div>
<div class="t" style="left:1286.40px;top:1539.63px;font:400 25.6px/25.6px 'Liberation Sans';color:#2c6ed0;transform:scaleX(0.9256);transform-origin:1.00px 0;">2.0.106</div>
<div class="t" style="left:1613.20px;top:1539.93px;font:400 25.6px/25.6px 'Liberation Sans';color:#2c6ed0;letter-spacing:0.351px;">crates-upstream</div>
<div class="t" style="left:1940.80px;top:1539.73px;font:400 25.6px/25.6px 'Liberation Sans';color:#0b0b0d;transform:scaleX(0.9668);transform-origin:1.00px 0;">Cargo</div>
<div class="t" style="left:2267.40px;top:1539.93px;font:400 25.6px/25.6px 'Liberation Sans';color:#0b0b0d;">1</div>
<div class="t" style="left:2596.00px;top:1510.00px;font:400 28px/28px 'Liberation Sans';color:#0b0b0d;">0</div>
<div class="t" style="left:2596.00px;top:1565.90px;font:400 28px/28px 'Liberation Sans';color:#0b0b0d;">0</div>
<div class="t" style="left:2643.80px;top:1513.63px;font:700 21.7px/21.7px 'Liberation Sans';color:#2d3270;transform:scaleX(0.9204);transform-origin:1.00px 0;">Prod</div>
<div class="t" style="left:2643.80px;top:1569.63px;font:700 21.7px/21.7px 'Liberation Sans';color:#3899a6;transform:scaleX(0.9448);transform-origin:1.00px 0;">Non-Prod</div>
<div class="t" style="left:2922.60px;top:1539.73px;font:400 25.6px/25.6px 'Liberation Sans';color:#0b0b0d;letter-spacing:-0.107px;">2 weeks ago</div>
<div class="t" style="left:606.10px;top:572.18px;font:700 23.3px/23.3px 'Liberation Sans';color:#6b6d85;transform:scaleX(0.9604);transform-origin:1.00px 0;">NAME</div>
<div class="t" style="left:1106.50px;top:572.18px;font:700 23.3px/23.3px 'Liberation Sans';color:#6b6d85;transform:scaleX(0.9348);transform-origin:0.00px 0;">SIZE</div>
<div class="t" style="left:1298.00px;top:572.18px;font:700 23.3px/23.3px 'Liberation Sans';color:#6b6d85;transform:scaleX(0.9730);transform-origin:0.00px 0;">CHECKSUM</div>
<div class="t" style="left:2475.00px;top:572.18px;font:700 23.3px/23.3px 'Liberation Sans';color:#6b6d85;transform:scaleX(0.9798);transform-origin:1.00px 0;">DOWNLOAD COMMAND</div>
<div class="t" style="left:2956.00px;top:572.18px;font:700 23.3px/23.3px 'Liberation Sans';color:#6b6d85;transform:scaleX(0.9450);transform-origin:0.00px 0;">CREATED</div>
<div class="t" style="left:608.50px;top:668.93px;font:400 25.6px/25.6px 'Liberation Sans';color:#0b0b0d;letter-spacing:-0.039px;">/cratesunicode-ident-1.0.19.crate</div>
<div class="t" style="left:1108.70px;top:668.93px;font:400 25.6px/25.6px 'Liberation Sans';color:#0b0b0d;transform:scaleX(0.9689);transform-origin:0.00px 0;">46.37KB</div>
<div class="t" style="left:1323.00px;top:667.32px;font:400 27.5px/27.5px 'Liberation Sans';color:#6b6d85;-webkit-text-stroke:0.7px #6b6d85;transform:scaleX(0.9827);transform-origin:1.00px 0;">Copy SHA-512</div>
<div class="t" style="left:1600.00px;top:667.32px;font:400 27.5px/27.5px 'Liberation Sans';color:#6b6d85;-webkit-text-stroke:0.7px #6b6d85;letter-spacing:-0.048px;">Copy SHA-256</div>
<div class="t" style="left:1879.50px;top:667.32px;font:400 27.5px/27.5px 'Liberation Sans';color:#6b6d85;-webkit-text-stroke:0.7px #6b6d85;transform:scaleX(0.9798);transform-origin:1.00px 0;">Copy SHA-1</div>
<div class="t" style="left:2124.00px;top:667.32px;font:400 27.5px/27.5px 'Liberation Sans';color:#6b6d85;-webkit-text-stroke:0.7px #6b6d85;transform:scaleX(0.9836);transform-origin:1.00px 0;">Copy MD5</div>
<div class="t" style="left:2473.00px;top:667.32px;font:400 27.5px/27.5px 'Liberation Sans';color:#2c6ed0;-webkit-text-stroke:0.7px #2c6ed0;transform:scaleX(0.9835);transform-origin:1.00px 0;">Copy</div>
<div class="t" style="left:2954.00px;top:668.93px;font:400 25.6px/25.6px 'Liberation Sans';color:#0b0b0d;letter-spacing:-0.147px;">2 weeks ago</div>
<div class="t" style="left:597.00px;top:1051.08px;font:700 23.3px/23.3px 'Liberation Sans';color:#6b6d85;transform:scaleX(0.9626);transform-origin:1.00px 0;">DIGEST</div>
<div class="t" style="left:1098.00px;top:1051.08px;font:700 23.3px/23.3px 'Liberation Sans';color:#6b6d85;transform:scaleX(0.9793);transform-origin:0.00px 0;">OS/ARCH</div>
<div class="t" style="left:1515.40px;top:1051.08px;font:700 23.3px/23.3px 'Liberation Sans';color:#6b6d85;transform:scaleX(0.9348);transform-origin:0.00px 0;">SIZE</div>
<div class="t" style="left:1931.40px;top:1051.08px;font:700 23.3px/23.3px 'Liberation Sans';color:#6b6d85;transform:scaleX(0.9468);transform-origin:1.00px 0;">UPLOADED AT</div>
<div class="t" style="left:2348.40px;top:1051.08px;font:700 23.3px/23.3px 'Liberation Sans';color:#6b6d85;transform:scaleX(0.9625);transform-origin:1.00px 0;">DOWNLOADS</div>
<div class="t" style="left:2766.00px;top:1051.08px;font:700 23.3px/23.3px 'Liberation Sans';color:#6b6d85;transform:scaleX(0.9773);transform-origin:0.00px 0;">SCAN STATUS</div>
<div class="t" style="left:599.00px;top:1146.73px;font:400 25.6px/25.6px 'Liberation Sans';color:#2c6ed0;letter-spacing:-0.092px;">eafc1edb577d</div>
<div class="t" style="left:1099.80px;top:1146.73px;font:400 25.6px/25.6px 'Liberation Sans';color:#0b0b0d;letter-spacing:0.143px;">linux/amd64</div>
<div class="t" style="left:1517.70px;top:1146.73px;font:400 25.6px/25.6px 'Liberation Sans';color:#0b0b0d;transform:scaleX(0.9790);transform-origin:0.00px 0;">3.63MB</div>
<div class="t" style="left:1932.00px;top:1146.73px;font:400 25.6px/25.6px 'Liberation Sans';color:#0b0b0d;letter-spacing:-0.047px;">2 weeks ago</div>
<div class="t" style="left:2348.40px;top:1146.73px;font:400 25.6px/25.6px 'Liberation Sans';color:#0b0b0d;">0</div>
<div class="t" style="left:2764.40px;top:1146.73px;font:400 25.6px/25.6px 'Liberation Sans';color:#0b0b0d;letter-spacing:0.086px;">Not Scanned</div>
<script>(function(){var z=window.innerWidth/3448;if(z>0&&Math.abs(z-1)>0.01){document.documentElement.style.zoom=z;}})();</script>
</body></html>
